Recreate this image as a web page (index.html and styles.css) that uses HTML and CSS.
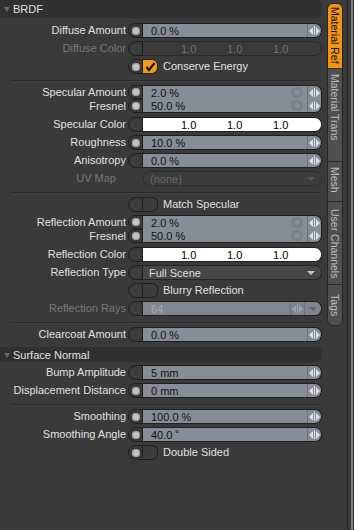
FILE: index.html
```html
<!DOCTYPE html>
<html lang="en">

<head>
    <meta charset="UTF-8">
    <meta name="viewport" content="width=device-width, initial-scale=1.0">
    <title>Material Ref</title>
    <link rel="stylesheet" href="styles.css">
</head>

<body>
    <div class="app">
        <div class="panel">
            <div class="section first"><span class="tri"></span>BRDF</div>

            <div class="row">
                <span class="label">Diffuse Amount</span>
                <span class="chan"></span>
                <div class="field"><span class="val">0.0 %</span><span class="spin"></span></div>
            </div>
            <div class="row">
                <span class="label off">Diffuse Color</span>
                <span class="chan dim"></span>
                <div class="swatch off"><span class="c">1.0</span><span class="c">1.0</span><span class="c">1.0</span></div>
            </div>
            <div class="row toggle">
                <span class="label"></span>
                <span class="chan"></span>
                <span class="box on"><svg width="13" height="13" viewBox="0 0 13 13"><path d="M2.5 7 L5 10 L10.5 3" fill="none" stroke="#111" stroke-width="2.2"/></svg></span>
                <span class="text">Conserve Energy</span>
            </div>

            <div class="sep"></div>

            <div class="pair">
                <span class="label">Specular Amount</span>
                <span class="chan"></span>
                <div class="field">
                    <div class="line"><span class="val">2.0 %</span><span class="link"></span><span class="spin"></span></div>
                    <div class="line"><span class="val">50.0 %</span><span class="link"></span><span class="spin"></span></div>
                </div>
                <span class="label">Fresnel</span>
                <span class="chan"></span>
            </div>
            <div class="row">
                <span class="label">Specular Color</span>
                <span class="chan dim"></span>
                <div class="swatch"><span class="c">1.0</span><span class="c">1.0</span><span class="c">1.0</span></div>
            </div>
            <div class="row">
                <span class="label">Roughness</span>
                <span class="chan"></span>
                <div class="field"><span class="val">10.0 %</span><span class="spin"></span></div>
            </div>
            <div class="row">
                <span class="label">Anisotropy</span>
                <span class="chan dim"></span>
                <div class="field"><span class="val">0.0 %</span><span class="spin"></span></div>
            </div>
            <div class="row">
                <span class="label off pad">UV Map</span>
                <span></span>
                <div class="drop off">(none)</div>
            </div>

            <div class="sep"></div>

            <div class="row toggle">
                <span class="label"></span>
                <span class="chan dim"></span>
                <span class="box"></span>
                <span class="text">Match Specular</span>
            </div>
            <div class="pair">
                <span class="label">Reflection Amount</span>
                <span class="chan"></span>
                <div class="field">
                    <div class="line"><span class="val">2.0 %</span><span class="link"></span><span class="spin"></span></div>
                    <div class="line"><span class="val">50.0 %</span><span class="link"></span><span class="spin"></span></div>
                </div>
                <span class="label">Fresnel</span>
                <span class="chan"></span>
            </div>
            <div class="row">
                <span class="label">Reflection Color</span>
                <span class="chan dim"></span>
                <div class="swatch"><span class="c">1.0</span><span class="c">1.0</span><span class="c">1.0</span></div>
            </div>
            <div class="row">
                <span class="label">Reflection Type</span>
                <span class="chan dim"></span>
                <div class="drop">Full Scene</div>
            </div>
            <div class="row toggle">
                <span class="label"></span>
                <span class="chan dim"></span>
                <span class="box"></span>
                <span class="text">Blurry Reflection</span>
            </div>
            <div class="row">
                <span class="label off">Reflection Rays</span>
                <span class="chan dim"></span>
                <div class="field off"><span class="val">64</span><span class="spin"></span><span class="pick"></span></div>
            </div>

            <div class="sep"></div>

            <div class="row">
                <span class="label">Clearcoat Amount</span>
                <span class="chan dim"></span>
                <div class="field"><span class="val">0.0 %</span><span class="spin"></span></div>
            </div>

            <div class="section"><span class="tri"></span>Surface Normal</div>

            <div class="row">
                <span class="label">Bump Amplitude</span>
                <span class="chan dim"></span>
                <div class="field"><span class="val">5 mm</span><span class="spin"></span></div>
            </div>
            <div class="row">
                <span class="label">Displacement Distance</span>
                <span class="chan"></span>
                <div class="field"><span class="val">0 mm</span><span class="spin"></span></div>
            </div>

            <div class="sep"></div>

            <div class="row">
                <span class="label">Smoothing</span>
                <span class="chan"></span>
                <div class="field"><span class="val">100.0 %</span><span class="spin"></span></div>
            </div>
            <div class="row">
                <span class="label">Smoothing Angle</span>
                <span class="chan"></span>
                <div class="field"><span class="val">40.0 ˚</span><span class="spin"></span></div>
            </div>
            <div class="row toggle">
                <span class="label"></span>
                <span class="chan"></span>
                <span class="box"></span>
                <span class="text">Double Sided</span>
            </div>
        </div>

        <div class="tabs">
            <div class="tab active tab-ref">Material Ref</div>
            <div class="tab tab-trans">Material Trans</div>
            <div class="tab tab-mesh">Mesh</div>
            <div class="tab tab-user">User Channels</div>
            <div class="tab tab-tags">Tags</div>
        </div>

        <div class="edge"></div>
    </div>
</body>

</html>
```

FILE: styles.css
```css
* {
    box-sizing: border-box;
}

html {
    height: 100%;
}

body {
    margin: 0;
    padding: 0;
    background: #3a3a3a;
    font-family: "Liberation Sans", Arial, sans-serif;
    font-size: 11px;
    color: #e0e0e0;
}

.app {
    display: flex;
    height: 530px;
}

.panel {
    width: 322px;
    display: flex;
    flex-direction: column;
}

/* section headers */

.section {
    height: 15px;
    margin: 2px 0 3px;
    background: #303030;
    border-radius: 0 6px 6px 0;
    display: flex;
    align-items: center;
}

.section.first {
    height: 18px;
    margin: 0 0 5px;
}

.tri {
    width: 0;
    height: 0;
    margin: 1px 3px 0 4px;
    border-top: 5px solid #6a6a6a;
    border-left: 3.5px solid transparent;
    border-right: 3.5px solid transparent;
}

.sep {
    height: 1px;
    margin: 3px 0 4px 12px;
    background: #2a2a2a;
    box-shadow: 0 1px 0 #424242;
}

/* rows */

.row {
    display: grid;
    grid-template-columns: 128px 15px 1fr;
    height: 15px;
    margin-bottom: 3px;
}

.row.toggle {
    grid-template-columns: 128px 15px 15px 1fr;
}

.pair {
    display: grid;
    grid-template-columns: 128px 15px 1fr;
    grid-template-rows: 14px 14px;
    margin-bottom: 4px;
}

.pair .field {
    grid-row: span 2;
    flex-direction: column;
    align-items: stretch;
}

.label {
    padding-right: 2px;
    text-align: right;
    white-space: nowrap;
    line-height: 15px;
}

.pair .label {
    line-height: 14px;
}

.label.off {
    color: #787878;
}

.label.pad {
    padding-right: 12px;
}

.text {
    padding-left: 5px;
    line-height: 15px;
    white-space: nowrap;
}

/* channel button */

.chan {
    display: flex;
    align-items: center;
    justify-content: center;
    background: #393939;
    border: 1px solid #1f1f1f;
    border-radius: 8px 0 0 8px;
}

.chan::after {
    content: '';
    width: 8px;
    height: 8px;
    border-radius: 50%;
    background: #c4c4c4;
    box-shadow: inset 0 0 0 1px #9a9a9a;
}

.chan.dim::after {
    background: #3a3a3a;
    box-shadow: inset 0 0 0 1px #474747;
}

/* check boxes */

.box {
    display: flex;
    align-items: center;
    justify-content: center;
    background: #3c3c3c;
    border: 1px solid #1f1f1f;
    border-left: none;
    border-radius: 0 6px 6px 0;
}

.box.on {
    background: #f39a12;
}

/* value fields */

.field {
    display: flex;
    align-items: center;
    background: #878d96;
    border: 1px solid #1f1f1f;
    border-left: none;
    border-radius: 0 7px 7px 0;
    color: #111;
    overflow: hidden;
}

.field.off {
    background: #80868d;
    color: #a7acb2;
}

.line {
    flex: 1;
    display: flex;
    align-items: center;
}

.val {
    padding-left: 8px;
    margin-right: auto;
    white-space: nowrap;
}

.link {
    width: 12px;
    height: 11px;
    margin-right: 4px;
    border: 3px solid #7b8189;
    border-radius: 6px;
}

.spin {
    align-self: stretch;
    width: 14px;
    display: flex;
    align-items: center;
    justify-content: center;
    gap: 3px;
    border-left: 1px solid #6c727a;
    background: linear-gradient(#d8dce0, #d8dce0) center / 1px 9px no-repeat;
}

.spin::before {
    content: '';
    border-right: 4px solid #dde0e4;
    border-top: 4px solid transparent;
    border-bottom: 4px solid transparent;
}

.spin::after {
    content: '';
    border-left: 4px solid #dde0e4;
    border-top: 4px solid transparent;
    border-bottom: 4px solid transparent;
}

.field.off .spin {
    background-image: linear-gradient(#9ba0a6, #9ba0a6);
}

.field.off .spin::before {
    border-right-color: #9ba0a6;
}

.field.off .spin::after {
    border-left-color: #9ba0a6;
}

.pick {
    align-self: stretch;
    width: 17px;
    display: flex;
    align-items: center;
    justify-content: center;
    border-left: 1px solid #6c727a;
}

.pick::after {
    content: '';
    border-top: 4px solid #5e6268;
    border-left: 4px solid transparent;
    border-right: 4px solid transparent;
}

/* colour swatches */

.swatch {
    display: flex;
    align-items: center;
    padding-left: 38px;
    background: #fff;
    border: 1px solid #1f1f1f;
    border-left: none;
    border-radius: 0 7px 7px 0;
    color: #000;
}

.swatch.off {
    background: #3a3a3a;
    border-color: #2a2a2a;
    color: #747474;
}

.c {
    width: 46px;
}

/* dropdowns */

.drop {
    display: flex;
    align-items: center;
    padding-left: 6px;
    background: #474747;
    border: 1px solid #252525;
    border-left: none;
    border-radius: 0 7px 7px 0;
    color: #dcdcdc;
}

.drop::after {
    content: '';
    margin: 0 6px 0 auto;
    border-top: 4px solid #c8c8c8;
    border-left: 4px solid transparent;
    border-right: 4px solid transparent;
}

.drop.off {
    border-left: 1px solid #2c2c2c;
    border-color: #2c2c2c;
    border-radius: 7px;
    background: #3d3d3d;
    color: #686868;
}

.drop.off::after {
    border-top-color: #585858;
}

/* side tabs */

.tabs {
    width: 16px;
    height: 323px;
    margin: 3px 0 0 5px;
    display: flex;
    flex-direction: column;
    background: #4f4f4f;
    border: 1px solid #262626;
    border-radius: 6px;
    overflow: hidden;
}

.tab {
    writing-mode: vertical-rl;
    padding-top: 5px;
    font-size: 10.5px;
    line-height: 14px;
    color: #bcbcbc;
    border-top: 1px solid #2c2c2c;
    white-space: nowrap;
}

.tab.active {
    background: #f29512;
    color: #111;
    border-top: none;
}

.tab-ref {
    height: 64px;
    padding-top: 3px;
}

.tab-trans {
    height: 93px;
}

.tab-mesh {
    height: 40px;
}

.tab-user {
    height: 83px;
    padding-top: 7px;
}

.tab-tags {
    flex: 1;
    padding-top: 9px;
}

.edge {
    margin-left: auto;
    width: 7px;
    background: linear-gradient(to right, #262626 0 1px, #3a3a3a 1px 4px, #7e7e7e 4px 6px, #2a2a2a 6px);
}
```
